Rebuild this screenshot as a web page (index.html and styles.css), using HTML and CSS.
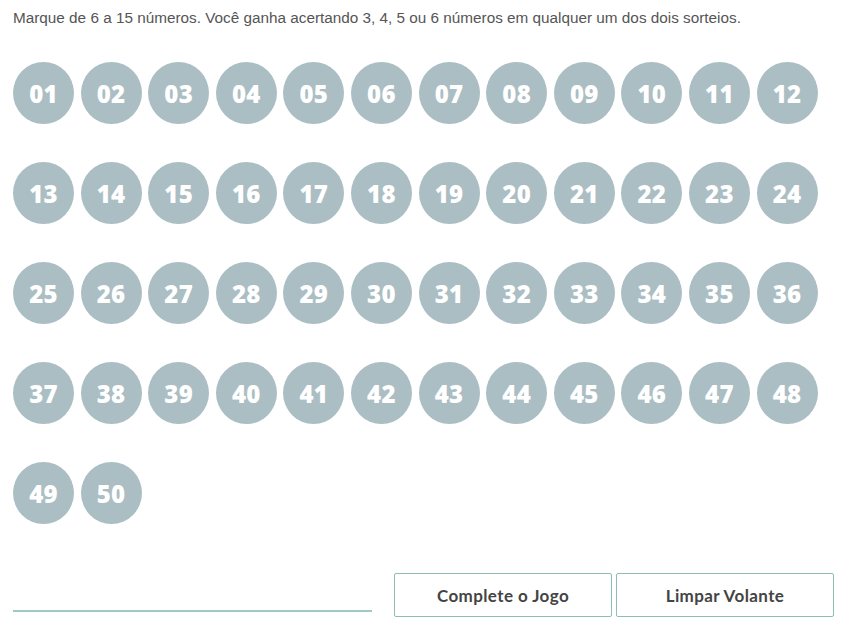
FILE: index.html
```html
<!DOCTYPE html>
<html lang="pt-BR">
<head>
<meta charset="utf-8">
<link rel="stylesheet" href="styles.css">
</head>
<body>
<div class="volante">
  <p class="instrucao">Marque de 6 a 15 números. Você ganha acertando 3, 4, 5 ou 6 números em qualquer um dos dois sorteios.</p>
  <div class="numeros">
    <span class="bola">01</span><span class="bola">02</span><span class="bola">03</span><span class="bola">04</span><span class="bola">05</span><span class="bola">06</span><span class="bola">07</span><span class="bola">08</span><span class="bola">09</span><span class="bola">10</span><span class="bola">11</span><span class="bola">12</span>
    <span class="bola">13</span><span class="bola">14</span><span class="bola">15</span><span class="bola">16</span><span class="bola">17</span><span class="bola">18</span><span class="bola">19</span><span class="bola">20</span><span class="bola">21</span><span class="bola">22</span><span class="bola">23</span><span class="bola">24</span>
    <span class="bola">25</span><span class="bola">26</span><span class="bola">27</span><span class="bola">28</span><span class="bola">29</span><span class="bola">30</span><span class="bola">31</span><span class="bola">32</span><span class="bola">33</span><span class="bola">34</span><span class="bola">35</span><span class="bola">36</span>
    <span class="bola">37</span><span class="bola">38</span><span class="bola">39</span><span class="bola">40</span><span class="bola">41</span><span class="bola">42</span><span class="bola">43</span><span class="bola">44</span><span class="bola">45</span><span class="bola">46</span><span class="bola">47</span><span class="bola">48</span>
    <span class="bola">49</span><span class="bola">50</span>
  </div>
  <div class="rodape">
    <div class="linha"></div>
    <button class="botao">Complete o Jogo</button>
    <button class="botao">Limpar Volante</button>
  </div>
</div>
</body>
</html>
```
FILE: styles.css
```css
html, body {
  margin: 0;
  padding: 0;
  background: #ffffff;
}
.volante {
  padding: 9px 13px 0 13px;
  font-family: "Liberation Sans", Arial, sans-serif;
}
.instrucao {
  margin: 0;
  font-size: 15.3px;
  line-height: 18px;
  color: #555555;
}
.numeros {
  margin-top: 35px;
  display: grid;
  grid-template-columns: repeat(12, 61px);
  column-gap: 6.6px;
  row-gap: 38px;
}
.bola {
  width: 61px;
  height: 62px;
  border-radius: 50%;
  background: #abbec3;
  color: #ffffff;
  display: flex;
  align-items: center;
  justify-content: center;
  font-family: "Open Sans", sans-serif;
  font-weight: 800;
  font-size: 24px;
  letter-spacing: 0.3px;
}
.rodape {
  margin-top: 49px;
  display: flex;
  align-items: flex-end;
}
.linha {
  width: 359px;
  height: 2px;
  background: #a3c7c1;
  margin-bottom: 5px;
}
.botao {
  height: 44px;
  width: 218px;
  background: #ffffff;
  border: 1px solid #8dbdb5;
  border-radius: 2px;
  color: #444444;
  font-family: "Lato", sans-serif;
  font-weight: 700;
  font-size: 17px;
  letter-spacing: 0.4px;
  padding: 0;
  margin-left: 4px;
}
.botao:first-of-type {
  margin-left: 22px;
}
```
